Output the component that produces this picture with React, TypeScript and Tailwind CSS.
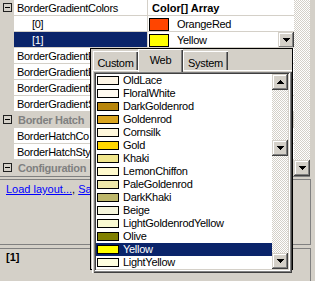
import React from "react";

// Win2k-style bevels
const raised =
  "shadow-[inset_-1px_-1px_#404040,inset_1px_1px_#d4d0c8,inset_-2px_-2px_#808080,inset_2px_2px_#ffffff]";
const sunken =
  "shadow-[inset_1px_1px_#808080,inset_-1px_-1px_#ffffff,inset_2px_2px_#404040,inset_-2px_-2px_#d4d0c8]";
const checker =
  "bg-[image:repeating-conic-gradient(#ffffff_0%_25%,#d4d0c8_0%_50%)] bg-size-[2px_2px]";

const Arrow = ({ up }: { up?: boolean }) => (
  <svg width="7" height="4" viewBox="0 0 7 4" shapeRendering="crispEdges" className={up ? "rotate-180" : ""}>
    <path d="M0 0h7v1H0zM1 1h5v1H1zM2 2h3v1H2zM3 3h1v1H3z" fill="#000" />
  </svg>
);

const ScrollButton = ({ up, className }: { up?: boolean; className?: string }) => (
  <div className={`w-[16px] h-[16px] bg-[#d4d0c8] flex items-center justify-center ${raised} ${className ?? ""}`}>
    <Arrow up={up} />
  </div>
);

const MinusBox = () => (
  <div className="w-[9px] h-[9px] border border-[#202020] bg-[#d4d0c8] flex items-center justify-center">
    <div className="w-[5px] h-[1px] bg-black" />
  </div>
);

const Swatch = ({ color, className }: { color: string; className?: string }) => (
  <div className={`border border-black shrink-0 ${className ?? ""}`} style={{ backgroundColor: color }} />
);

type Row = {
  name: string;
  box?: boolean;
  category?: boolean;
  indent?: boolean;
  selected?: boolean;
  value?: string;
  bold?: boolean;
  swatch?: string;
  dropdown?: boolean;
};

// rows under the dropdown keep an empty value cell
const rows: Row[] = [
  { name: "BorderGradientColors", box: true, value: "Color[] Array", bold: true },
  { name: "[0]", indent: true, swatch: "#ff4500", value: "OrangeRed" },
  { name: "[1]", indent: true, selected: true, swatch: "#ffff00", value: "Yellow", dropdown: true },
  { name: "BorderGradientE" },
  { name: "BorderGradientE" },
  { name: "BorderGradientE" },
  { name: "BorderGradientS" },
  { name: "Border Hatch", box: true, category: true },
  { name: "BorderHatchCo" },
  { name: "BorderHatchSty" },
  { name: "Configuration", box: true, category: true },
];

const items: [string, string][] = [
  ["OldLace", "#fdf5e6"],
  ["FloralWhite", "#fffaf0"],
  ["DarkGoldenrod", "#b8860b"],
  ["Goldenrod", "#daa520"],
  ["Cornsilk", "#fff8dc"],
  ["Gold", "#ffd700"],
  ["Khaki", "#f0e68c"],
  ["LemonChiffon", "#fffacd"],
  ["PaleGoldenrod", "#eee8aa"],
  ["DarkKhaki", "#bdb76b"],
  ["Beige", "#f5f5dc"],
  ["LightGoldenrodYellow", "#fafad2"],
  ["Olive", "#808000"],
  ["Yellow", "#ffff00"],
  ["LightYellow", "#ffffe0"],
];

const GridRow = ({ row }: { row: Row }) => (
  <div className="flex h-[16px]">
    <div className="w-[14px] shrink-0 pl-[3px] pt-[3px]">{row.box && <MinusBox />}</div>
    {row.category ? (
      <div className="w-[76px] h-[15px] pl-[4px] leading-[16px] font-bold text-[#808080] whitespace-nowrap overflow-hidden">
        {row.name}
      </div>
    ) : (
      <>
        <div
          className={`w-[133px] h-[15px] leading-[16px] whitespace-nowrap overflow-hidden ${
            row.indent ? "pl-[18px]" : "pl-[3px]"
          } ${row.selected ? "bg-[#0a246a] text-white" : "bg-white text-black"}`}
        >
          {row.name}
        </div>
        <div className="w-[1px]" />
        <div className="w-[146px] h-[15px] bg-white flex items-start whitespace-nowrap overflow-hidden relative">
          {row.swatch && <Swatch color={row.swatch} className="w-[20px] h-[13px] ml-[1px] mt-[2px]" />}
          {row.value && (
            <span className={`leading-[16px] ${row.swatch ? "pl-[8px]" : "pl-[4px]"} ${row.bold ? "font-bold tracking-normal" : ""}`}>
              {row.value}
            </span>
          )}
          {row.dropdown && <ScrollButton className="absolute right-0 top-0 w-[15px] h-[15px]" />}
        </div>
      </>
    )}
  </div>
);

const Tab = ({ label, active }: { label: string; active?: boolean }) => (
  <div
    className={`w-[45px] bg-[#d4d0c8] text-center shadow-[inset_1px_1px_#ffffff,inset_-1px_0_#404040,inset_-2px_0_#808080] ${
      active ? "h-[23px] -mb-[2px] pt-[3px] relative z-10" : "h-[19px] pt-[4px]"
    }`}
  >
    <span className="leading-[13px]">{label}</span>
  </div>
);

export default function App() {
  return (
    <div className="w-[315px] h-[281px] bg-[#d4d0c8] relative overflow-hidden font-['Liberation_Sans',Arial,sans-serif] text-[11px] tracking-[-0.3px] text-black">
      {/* property grid */}
      <div className="flex h-[177px] border-b border-[#808080] w-[310px]">
        <div className="w-[294px] flex flex-col">
          {rows.map((r, i) => (
            <GridRow key={i} row={r} />
          ))}
        </div>
        <div className={`w-[16px] flex flex-col justify-end ${checker}`}>
          <ScrollButton />
        </div>
      </div>

      {/* commands panel */}
      <div className="mt-[2px] -ml-[1px] w-[312px] h-[66px] border border-[#808080] px-[6px] pt-[3px] leading-[13px] tracking-normal">
        <span className="text-[#0000ff] underline">Load layout...</span>
        <span>, </span>
        <span className="text-[#0000ff] underline">Sa</span>
      </div>

      {/* description panel */}
      <div className="mt-[3px] -ml-[1px] w-[312px] h-[40px] border border-[#808080] px-[6px] pt-[2px] leading-[13px] font-bold tracking-normal">
        [1]
      </div>

      {/* color dropdown */}
      <div className="absolute left-[90px] top-[48px] w-[203px] h-[222px] bg-[#d4d0c8] border border-black flex flex-col">
        <div className="flex items-end h-[21px] pl-[2px]">
          <Tab label="Custom" />
          <Tab label="Web" active />
          <Tab label="System" />
        </div>
        <div className="ml-[1px] flex-1 p-[2px] shadow-[inset_1px_1px_#ffffff,inset_2px_2px_#d4d0c8,inset_-1px_-1px_#404040,inset_-2px_-2px_#808080]">
          <div className={`h-full bg-white p-[2px] flex ${sunken}`}>
            <div className="flex-1 overflow-hidden">
              {items.map(([name, color]) => {
                const sel = name === "Yellow";
                return (
                  <div
                    key={name}
                    className={`flex items-start h-[13px] ${sel ? "bg-[#0a246a] text-white" : ""}`}
                  >
                    <Swatch color={color} className="w-[22px] h-[9px] ml-[1px] mt-[2px]" />
                    <span className="pl-[4px] leading-[13px] whitespace-nowrap">{name}</span>
                  </div>
                );
              })}
            </div>
            <div className={`w-[16px] flex flex-col ${checker}`}>
              <ScrollButton up />
              <div className="h-[50px]" />
              <ScrollButton className="h-[15px]" />
              <div className="flex-1" />
              <ScrollButton />
            </div>
          </div>
        </div>
      </div>
    </div>
  );
}
